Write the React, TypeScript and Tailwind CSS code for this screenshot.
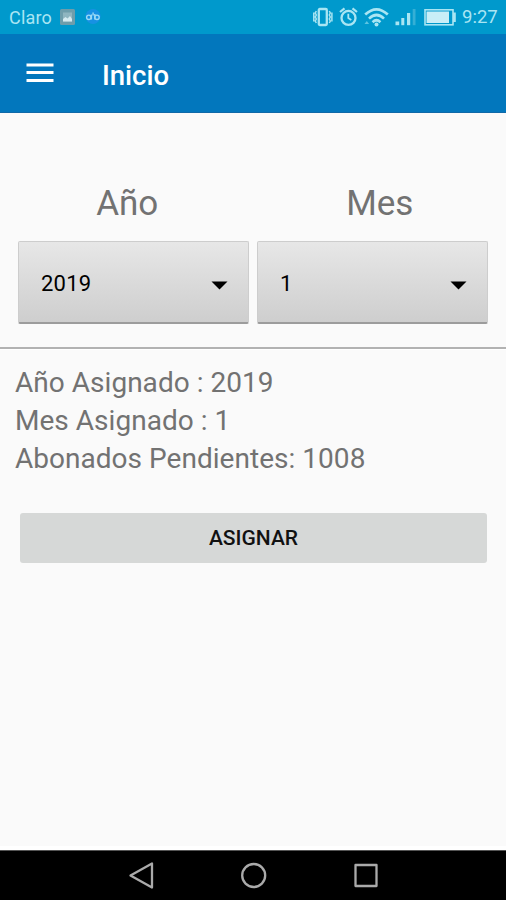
interface SpinnerProps {
    value: string;
}

const Spinner = ({ value }: SpinnerProps) => {
    return (
        <button className="flex h-[83px] w-[231px] items-center justify-between rounded-[2px] border border-[#cdcdcd] border-b-2 border-b-[#9c9c9c] bg-linear-to-b from-[#e7e7e7] to-[#cecece] pr-[20px] pl-[22px] text-[22px] text-black">
            <span className="mt-[2px] tracking-[0.2px]">{value}</span>
            <svg width="17" height="9" viewBox="0 0 17 9" className="mt-[6px]" fill="#000">
                <path d="M0.5 0.5h16L8.5 8.5z" />
            </svg>
        </button>
    );
};

const StatusBar = () => {
    return (
        <div className="flex h-[34px] shrink-0 items-center bg-[#0099cc] pl-[9px] text-[18px] text-[#a9e5f3]">
            <span className="w-[51px] tracking-[0.2px]">Claro</span>
            <svg width="15" height="16" viewBox="0 0 15 16">
                <rect width="15" height="16" rx="1.5" fill="#6e9dab" />
                <rect x="3" y="3.5" width="9" height="9" fill="#8fb5c0" />
                <path d="M3 12.5V10l2.5-2 2 1.5L10 7l2 3v2.5z" fill="#d5eaf0" />
            </svg>
            <svg width="18" height="18" viewBox="0 0 18 18" className="ml-[9px]">
                <circle cx="9" cy="8.5" r="7.5" fill="#1791e3" />
                <g fill="none" stroke="#9bd9f5" strokeWidth="1.4">
                    <circle cx="4.8" cy="9.3" r="2.2" />
                    <path d="M7.4 6.5v5M9.1 4.5v3M10.8 6v5.5" />
                    <circle cx="13" cy="9.3" r="2.2" />
                </g>
            </svg>
            <div className="ml-auto flex items-center">
                <svg width="20" height="20" viewBox="0 0 20 20" fill="none" stroke="#a9e5f3">
                    <rect x="5.8" y="2" width="8" height="16" rx="1" strokeWidth="2.3" />
                    <path d="M3.3 4l-1 2 1 2-1 2 1 2-1 2 1 2M0.8 5.5v9M16.3 4l1 2-1 2 1 2-1 2 1 2-1 2M18.9 5.5v9" strokeWidth="1.5" />
                </svg>
                <svg width="20" height="20" viewBox="0 0 20 20" className="ml-[6px]" fill="none" stroke="#a9e5f3">
                    <circle cx="9.5" cy="10.9" r="7" strokeWidth="2.3" />
                    <path d="M1 5l4.5-3.7M18 5l-4.5-3.7" strokeWidth="2.2" />
                    <path d="M9.3 6.8v4.3l3 2" strokeWidth="1.8" />
                </svg>
                <svg width="26" height="20" viewBox="0 0 26 20" className="ml-[5px]" fill="none" stroke="#a9e5f3" strokeWidth="2.7">
                    <path d="M1.2 7.6Q12.5-2.8 23.8 7.6" />
                    <path d="M5 11.6Q12.5 4.4 20 11.6" />
                    <path d="M8.6 15.2Q12.5 11.4 16.4 15.2" />
                    <circle cx="12.5" cy="17.6" r="2" fill="#a9e5f3" stroke="none" />
                    <path d="M0.5 17l2.3-3 2.3 3z" fill="#5cc4e2" stroke="none" />
                </svg>
                <svg width="22" height="20" viewBox="0 0 22 20" className="ml-[5px]" fill="#a9e5f3">
                    <rect x="0.5" y="14.5" width="3.7" height="3.7" />
                    <rect x="6.3" y="11" width="3" height="7.2" />
                    <rect x="12" y="6" width="3.2" height="12.2" />
                    <rect x="17.7" y="2" width="2.8" height="16.2" fill="#35afd5" />
                </svg>
                <svg width="33" height="18" viewBox="0 0 33 18" className="ml-[7px]">
                    <rect x="1" y="1.8" width="28" height="15" fill="none" stroke="#a9e5f3" strokeWidth="1.6" />
                    <rect x="2.5" y="3.5" width="22.5" height="11.5" fill="#c9eef7" />
                    <path d="M29 4.5h2.8v9.5H29z" fill="#a9e5f3" />
                </svg>
                <span className="mt-[2px] ml-[5px] w-[44px] text-[18.5px] whitespace-nowrap">9:27</span>
            </div>
        </div>
    );
};

const AppBar = () => {
    return (
        <header className="flex h-[79px] shrink-0 items-center border-b border-[#1069a8] bg-[#0277bd] pl-[26px] text-white">
            <svg width="28" height="20" viewBox="0 0 28 20" fill="#fff">
                <rect x="0.5" y="0.5" width="27" height="3" />
                <rect x="0.5" y="8" width="27" height="3" />
                <rect x="0.5" y="16" width="27" height="3" />
            </svg>
            <h1 className="mt-[6px] ml-[48px] text-[27.5px] font-medium">Inicio</h1>
        </header>
    );
};

const NavBar = () => {
    return (
        <nav className="flex h-[50px] shrink-0 items-center border-t border-[#555] bg-black pl-[128px]">
            <svg width="250" height="30" viewBox="0 0 250 30" fill="none" stroke="#aaa" strokeWidth="2.3" strokeLinejoin="round">
                <path d="M2.5 14.5L24 2.5v24z" />
                <circle cx="125.7" cy="14.5" r="11.5" />
                <rect x="227.5" y="4" width="21" height="21" />
            </svg>
        </nav>
    );
};

export default function App() {
    return (
        <div className="flex h-[900px] w-[506px] flex-col bg-[#fafafa] font-[Roboto,sans-serif]">
            <StatusBar />
            <AppBar />
            <main className="flex flex-1 flex-col">
                <div className="grid grid-cols-2 pt-[70px] pl-px text-center text-[35px] leading-[42px] text-[#727272]">
                    <span>Año</span>
                    <span>Mes</span>
                </div>
                <div className="mt-[16px] flex justify-center gap-[8px]">
                    <Spinner value="2019" />
                    <Spinner value="1" />
                </div>
                <div className="mt-[23px] h-[3px] border-t-2 border-[#b2b2b2] bg-white" />
                <div className="mt-[14px] flex flex-col pl-[15px] text-[28px] leading-[38px] tracking-[0.03px] text-[#727272]">
                    <span>Año Asignado : 2019</span>
                    <span>Mes Asignado : 1</span>
                    <span>Abonados Pendientes: 1008</span>
                </div>
                <button className="mx-[20px] mt-[35px] h-[50px] w-[467px] rounded-[3px] bg-[#d6d8d7] pt-[2px] text-[21px] font-medium text-[#111]">ASIGNAR</button>
                <div className="mt-auto h-1 bg-white" />
            </main>
            <NavBar />
        </div>
    );
}
